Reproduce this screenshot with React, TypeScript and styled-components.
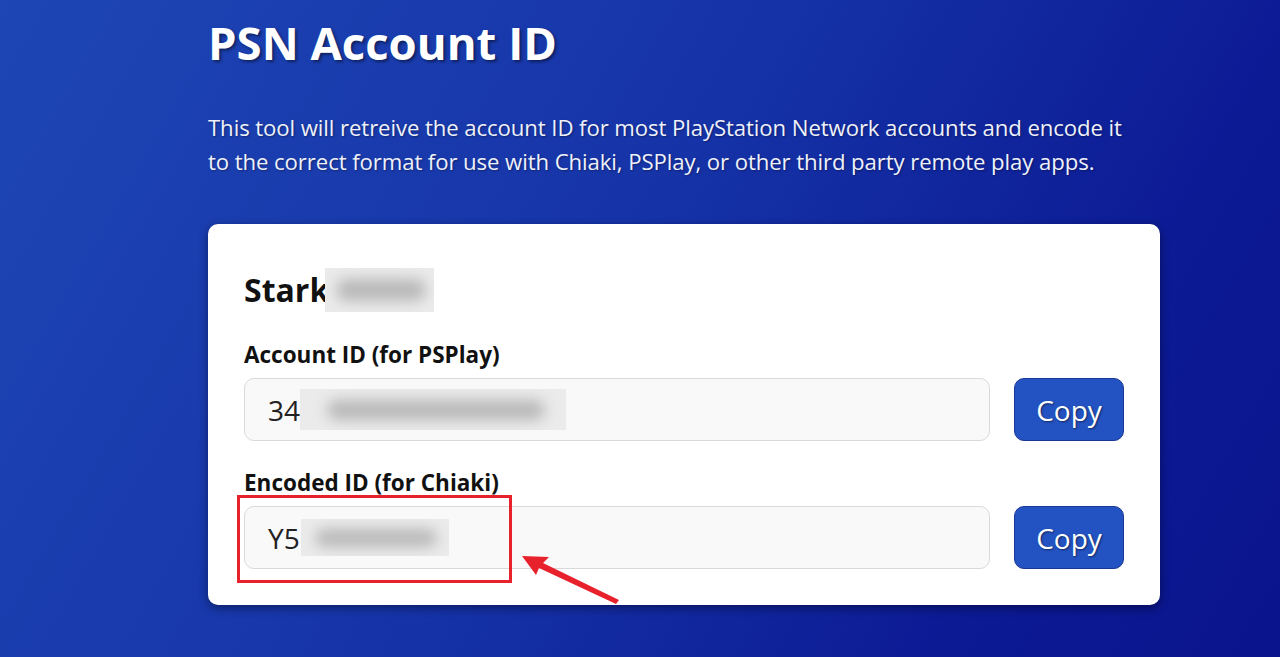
import React from "react";
import styled, { createGlobalStyle } from "styled-components";

const Global = createGlobalStyle`
  html, body { margin: 0; padding: 0; }
  body {
    font-family: "Open Sans", "Noto Sans", "Liberation Sans", sans-serif;
    background: linear-gradient(120deg, #1e46b5 0%, #1634a8 45%, #0c1a94 80%, #0a148c 100%);
    min-height: 657px;
    overflow: hidden;
  }
`;

const Page = styled.main`
  width: 952px;
  margin-left: 208px;
  padding-top: 15px;
`;

const Title = styled.h1`
  margin: 0;
  font-size: 45.5px;
  line-height: 54px;
  font-weight: 700;
  color: #fff;
  text-shadow: 2px 2px 3px rgba(0, 0, 0, 0.45);
`;

const Intro = styled.p`
  margin: 42px 0 0;
  max-width: 935px;
  font-size: 22.2px;
  line-height: 34px;
  color: #eef1fb;
  letter-spacing: -0.1px;
  text-shadow: 1px 1px 2px rgba(0, 0, 0, 0.35);
`;

const Card = styled.section`
  margin-top: 45px;
  background: #fff;
  border-radius: 10px;
  box-shadow: 0 3px 10px rgba(0, 0, 20, 0.45);
  padding: 44px 36px 36px;
  display: flex;
  flex-direction: column;
  gap: 30px;
`;

const Name = styled.h2`
  margin: 0 0 1px;
  font-size: 32px;
  line-height: 38px;
  font-weight: 700;
  color: #111;
  display: flex;
  align-items: center;
`;

const Group = styled.div`
  display: flex;
  flex-direction: column;
  gap: 11px;
`;

const Label = styled.label`
  font-size: 22.5px;
  line-height: 24px;
  font-weight: 700;
  color: #111;
`;

const Row = styled.div`
  position: relative;
  display: flex;
  gap: 24px;
  height: 63px;
`;

const Field = styled.div`
  flex: 1;
  box-sizing: border-box;
  border: 1px solid #d9d9d9;
  background: #f9f9f9;
  border-radius: 10px;
  padding: 0 0 0 23px;
  display: flex;
  align-items: center;
  font-size: 28px;
  color: #222;
`;

const CopyButton = styled.button`
  width: 110px;
  box-sizing: border-box;
  border: 1px solid #1a3896;
  background: #2352c2;
  border-radius: 10px;
  color: #fff;
  font-family: inherit;
  font-size: 28px;
  text-shadow: 1px 1px 2px rgba(0, 0, 0, 0.5);
  cursor: pointer;
`;

const Blur = styled.span<{ $w: number; $h: number }>`
  display: inline-block;
  width: ${(p) => p.$w}px;
  height: ${(p) => p.$h}px;
  background: #ebebeb;
  position: relative;
  overflow: hidden;
  &::after {
    content: "";
    position: absolute;
    left: 10%;
    right: 8%;
    top: 26%;
    bottom: 24%;
    background: #b8b8b8;
    filter: blur(7px);
    border-radius: 20px;
  }
`;

const Highlight = styled.div`
  position: absolute;
  left: -7px;
  top: -11px;
  width: 275px;
  height: 88px;
  box-sizing: border-box;
  border: 3px solid #e8222c;
  pointer-events: none;
`;

const Arrow = styled.svg`
  position: absolute;
  left: 270px;
  top: 40px;
  width: 120px;
  height: 70px;
  pointer-events: none;
`;

export default function App() {
  return (
    <>
      <Global />
      <Page>
        <Title>PSN Account ID</Title>
        <Intro>
          This tool will retreive the account ID for most PlayStation Network accounts and encode it
          to the correct format for use with Chiaki, PSPlay, or other third party remote play apps.
        </Intro>
        <Card>
          <Name>
            Stark
            <Blur $w={109} $h={44} style={{ marginLeft: -4 }} />
          </Name>
          <Group>
            <Label>Account ID (for PSPlay)</Label>
            <Row>
              <Field>
                34
                <Blur $w={266} $h={41} />
              </Field>
              <CopyButton>Copy</CopyButton>
            </Row>
          </Group>
          <Group>
            <Label>Encoded ID (for Chiaki)</Label>
            <Row>
              <Field>
                Y5
                <Blur $w={148} $h={37} style={{ marginLeft: 1 }} />
              </Field>
              <CopyButton>Copy</CopyButton>
              <Highlight />
              <Arrow viewBox="270 40 120 70">
                <polygon
                  points="278,50 305,51 299,57 375,94 372,98 295,62 292,69"
                  fill="#e8222c"
                />
              </Arrow>
            </Row>
          </Group>
        </Card>
      </Page>
    </>
  );
}
